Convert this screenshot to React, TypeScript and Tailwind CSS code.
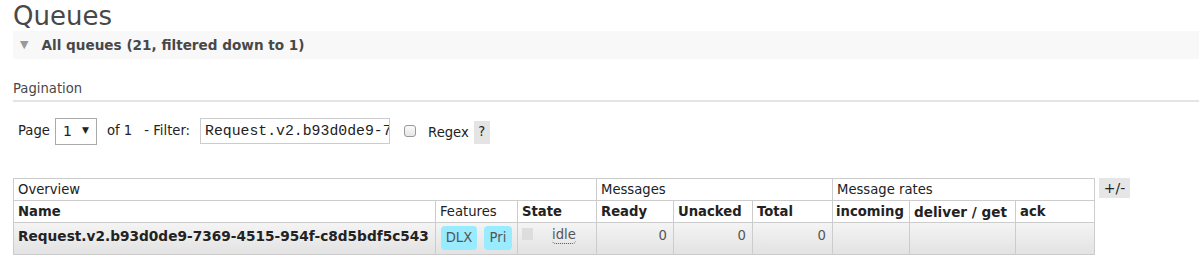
import React from "react";

const font = { fontFamily: '"DejaVu Sans", Verdana, sans-serif' };

export default function App() {
  return (
    <div className="bg-white text-[#484848] w-[1199px] h-[273px] overflow-hidden pl-[13px]" style={font}>
      <h1 className="text-[26px] leading-[30px] pt-[1px] text-[#484848]">Queues</h1>
      <div className="h-[28px] bg-[#f8f8f8] flex items-center pl-[7px] text-[13.6px] font-bold text-[#484848]">
        <span className="text-[#999] text-[11px] mr-[13px] mt-[1px]">▼</span>
        <span>All queues (21, filtered down to 1)</span>
      </div>
      <div className="mt-[22px] pb-[3px] border-b-[2px] border-[#e4e4e4] text-[13.2px] leading-[16px] text-[#484848]">Pagination</div>
      <div className="mt-[15px] flex items-center h-[28px] text-[13.2px] text-[#222]">
        <span className="ml-[5px]">Page</span>
        <div className="ml-[5px] w-[42px] h-[27px] border border-[#aaa] flex items-center justify-between px-[7px] text-[14px]">
          <span>1</span>
          <span className="text-[9px]">▼</span>
        </div>
        <span className="ml-[10px]">of 1</span>
        <span className="ml-[12px]">- Filter:</span>
        <input
          readOnly
          value="Request.v2.b93d0de9-7369-4515-954f-c8d5bdf5c543"
          className="ml-[10px] w-[190px] h-[26px] border border-[#ccc] pl-[4px] text-[14.8px] text-[#222] outline-none"
          style={{ fontFamily: '"Liberation Mono", "Courier New", monospace' }}
        />
        <span className="ml-[14px] w-[12px] h-[12px] shrink-0 rounded-[3px] border border-[#999] bg-gradient-to-b from-[#fafafa] to-[#e6e6e6]"></span>
        <span className="ml-[12px] mt-[3px]">Regex</span>
        <span className="ml-[5px] mt-[2px] w-[16px] h-[23px] bg-[#e4e4e4] flex items-center justify-center">?</span>
      </div>
      <div className="mt-[33px] flex items-start">
        <table className="border-collapse text-[13.2px] text-[#222]" style={{ tableLayout: "fixed" }}>
          <colgroup>
            <col className="w-[422px]" />
            <col className="w-[82px]" />
            <col className="w-[79px]" />
            <col className="w-[77px]" />
            <col className="w-[79px]" />
            <col className="w-[80px]" />
            <col className="w-[77px]" />
            <col className="w-[106px]" />
            <col className="w-[79px]" />
          </colgroup>
          <thead>
            <tr className="h-[22px]">
              <th colSpan={3} className="border border-[#ccc] text-left font-normal px-[4px] leading-[20px]">Overview</th>
              <th colSpan={3} className="border border-[#ccc] text-left font-normal px-[4px] leading-[20px]">Messages</th>
              <th colSpan={3} className="border border-[#ccc] text-left font-normal px-[4px] leading-[20px]">Message rates</th>
            </tr>
            <tr className="h-[22px]">
              <th className="border border-[#ccc] text-left font-bold px-[4px] leading-[20px]">Name</th>
              <th className="border border-[#ccc] text-left font-normal px-[4px] leading-[20px]">Features</th>
              <th className="border border-[#ccc] text-left font-bold px-[4px] leading-[20px]">State</th>
              <th className="border border-[#ccc] text-left font-bold px-[4px] leading-[20px]">Ready</th>
              <th className="border border-[#ccc] text-left font-bold px-[4px] leading-[20px]">Unacked</th>
              <th className="border border-[#ccc] text-left font-bold px-[4px] leading-[20px]">Total</th>
              <th className="border border-[#ccc] text-left font-bold px-[3px] leading-[20px]">incoming</th>
              <th className="border border-[#ccc] text-left font-bold px-[4px] leading-[20px] text-[13.6px]">deliver / get</th>
              <th className="border border-[#ccc] text-left font-bold px-[4px] leading-[20px]">ack</th>
            </tr>
          </thead>
          <tbody>
            <tr className="h-[32px] bg-gradient-to-b from-[#f4f4f4] to-[#e2e2e2] align-top">
              <td className="border border-[#ccc] px-[4px] pt-[3px] font-bold whitespace-nowrap overflow-hidden leading-[20px] text-[13.7px]">Request.v2.b93d0de9-7369-4515-954f-c8d5bdf5c543</td>
              <td className="border border-[#ccc] px-[5px] pt-[3px]">
                <div className="flex gap-[7px] text-[#555]">
                  <span className="bg-[#99ebff] rounded-[4px] h-[24px] w-[36px] flex items-center justify-center">DLX</span>
                  <span className="bg-[#99ebff] rounded-[4px] h-[24px] w-[28px] flex items-center justify-center">Pri</span>
                </div>
              </td>
              <td className="border border-[#ccc] px-[4px] pt-[5px]">
                <div className="flex items-start text-[#555]">
                  <span className="w-[11px] h-[12px] shrink-0 bg-[#ddd]"></span>
                  <span className="ml-[19px] -mt-[1px] border-b border-dotted border-[#555] rounded-b-[4px] leading-[16px]">idle</span>
                </div>
              </td>
              <td className="border border-[#ccc] px-[6px] pt-[3px] text-right text-[#555] leading-[20px]">0</td>
              <td className="border border-[#ccc] px-[6px] pt-[3px] text-right text-[#555] leading-[20px]">0</td>
              <td className="border border-[#ccc] px-[6px] pt-[3px] text-right text-[#555] leading-[20px]">0</td>
              <td className="border border-[#ccc]"></td>
              <td className="border border-[#ccc]"></td>
              <td className="border border-[#ccc]"></td>
            </tr>
          </tbody>
        </table>
        <span className="ml-[4px] w-[31px] h-[20px] bg-[#e6e6e6] text-[14px] text-[#222] flex items-center justify-center">+/-</span>
      </div>
    </div>
  );
}
